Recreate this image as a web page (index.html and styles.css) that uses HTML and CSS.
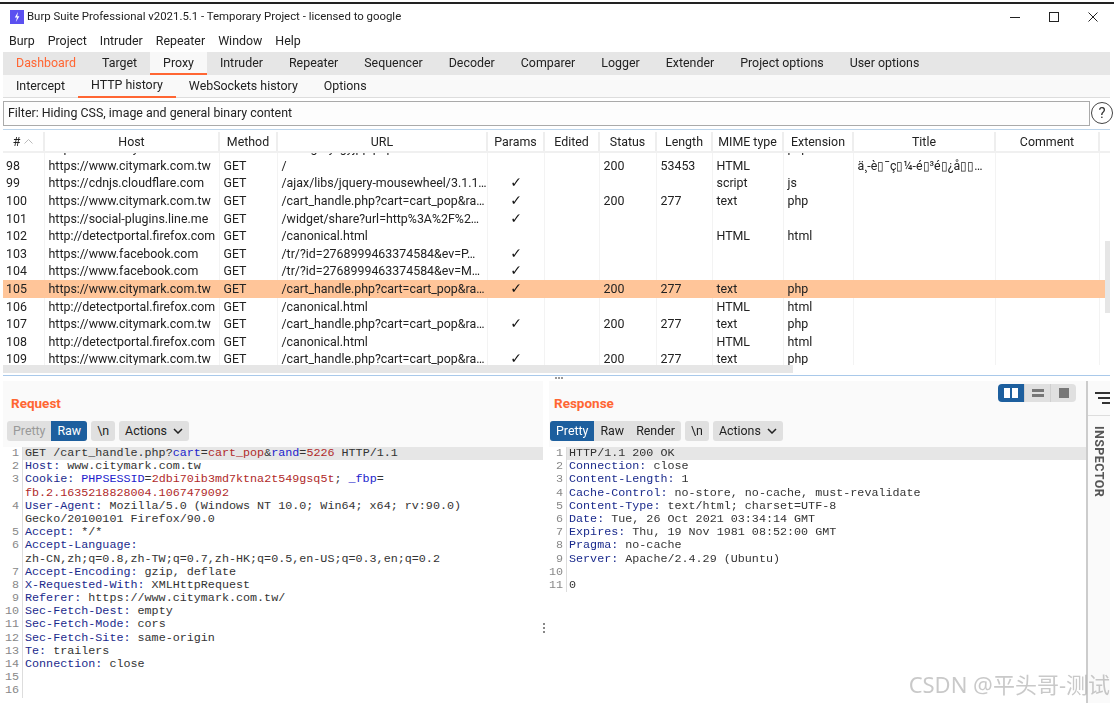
FILE: index.html
```html
<!DOCTYPE html>
<html lang="en">
<head>
<meta charset="utf-8">
<title>Burp Suite Professional</title>
<link rel="stylesheet" href="styles.css">
</head>
<body>
<div class="app">
  <header class="titlebar">
    <svg class="logo" width="14" height="14" viewBox="0 0 14 14"><rect width="14" height="14" fill="#5b50f0"/><path d="M8 2 4.8 7.6H7L5.8 12 9.4 6.2H7.2Z" fill="#fff"/></svg>
    <span class="title">Burp Suite Professional v2021.5.1 - Temporary Project - licensed to google</span>
    <div class="winctl">
      <svg width="12" height="12" viewBox="0 0 12 12"><path d="M1 6.5H11" stroke="#222" fill="none"/></svg>
      <svg width="12" height="12" viewBox="0 0 12 12"><rect x="1.5" y="1.5" width="9" height="9" stroke="#222" fill="none"/></svg>
      <svg width="12" height="12" viewBox="0 0 12 12"><path d="M1.5 1.5 10.5 10.5M10.5 1.5 1.5 10.5" stroke="#222" fill="none"/></svg>
    </div>
  </header>
  <nav class="menubar">
    <span>Burp</span><span>Project</span><span>Intruder</span><span>Repeater</span><span>Window</span><span>Help</span>
  </nav>
  <nav class="tabs">
    <span class="tab tab-alert">Dashboard</span><span class="tab">Target</span><span class="tab tab-on">Proxy</span><span class="tab">Intruder</span><span class="tab">Repeater</span><span class="tab">Sequencer</span><span class="tab">Decoder</span><span class="tab">Comparer</span><span class="tab">Logger</span><span class="tab">Extender</span><span class="tab">Project options</span><span class="tab">User options</span>
  </nav>
  <nav class="subtabs">
    <span class="subtab">Intercept</span><span class="subtab subtab-on">HTTP history</span><span class="subtab">WebSockets history</span><span class="subtab">Options</span>
  </nav>
  <div class="filterrow">
    <div class="filter">Filter: Hiding CSS, image and general binary content</div>
    <div class="help">?</div>
  </div>
  <section class="history">
    <div class="row head">
      <div class="num">#<svg class="sort" width="9" height="5" viewBox="0 0 9 5"><path d="M.5 4.5 4.5.5 8.5 4.5" stroke="#bbb" fill="none"/></svg></div><div>Host</div><div>Method</div><div>URL</div><div>Params</div><div>Edited</div><div>Status</div><div>Length</div><div>MIME type</div><div>Extension</div><div>Title</div><div>Comment</div><div></div>
    </div>
    <div class="rows">
      <div class="rows-inner">
        <div class="row"><div>97</div><div>https://www.citymark.com.tw</div><div>GET</div><div>/category/gyjpp.php</div><div class="ck">✓</div><div></div><div></div><div></div><div></div><div>php</div><div></div><div></div></div>
        <div class="row"><div>98</div><div>https://www.citymark.com.tw</div><div>GET</div><div>/</div><div class="ck"></div><div></div><div>200</div><div>53453</div><div>HTML</div><div></div><div>ä¸-è▯¯ç▯¼-é▯³é▯¿å▯▯…</div><div></div></div>
        <div class="row"><div>99</div><div>https://cdnjs.cloudflare.com</div><div>GET</div><div>/ajax/libs/jquery-mousewheel/3.1.1…</div><div class="ck">✓</div><div></div><div></div><div></div><div>script</div><div>js</div><div></div><div></div></div>
        <div class="row"><div>100</div><div>https://www.citymark.com.tw</div><div>GET</div><div>/cart_handle.php?cart=cart_pop&amp;ra…</div><div class="ck">✓</div><div></div><div>200</div><div>277</div><div>text</div><div>php</div><div></div><div></div></div>
        <div class="row"><div>101</div><div>https://social-plugins.line.me</div><div>GET</div><div>/widget/share?url=http%3A%2F%2…</div><div class="ck">✓</div><div></div><div></div><div></div><div></div><div></div><div></div><div></div></div>
        <div class="row"><div>102</div><div>http://detectportal.firefox.com</div><div>GET</div><div>/canonical.html</div><div class="ck"></div><div></div><div></div><div></div><div>HTML</div><div>html</div><div></div><div></div></div>
        <div class="row"><div>103</div><div>https://www.facebook.com</div><div>GET</div><div>/tr/?id=2768999463374584&amp;ev=P…</div><div class="ck">✓</div><div></div><div></div><div></div><div></div><div></div><div></div><div></div></div>
        <div class="row"><div>104</div><div>https://www.facebook.com</div><div>GET</div><div>/tr/?id=2768999463374584&amp;ev=M…</div><div class="ck">✓</div><div></div><div></div><div></div><div></div><div></div><div></div><div></div></div>
        <div class="row row-sel"><div>105</div><div>https://www.citymark.com.tw</div><div>GET</div><div>/cart_handle.php?cart=cart_pop&amp;ra…</div><div class="ck">✓</div><div></div><div>200</div><div>277</div><div>text</div><div>php</div><div></div><div></div></div>
        <div class="row"><div>106</div><div>http://detectportal.firefox.com</div><div>GET</div><div>/canonical.html</div><div class="ck"></div><div></div><div></div><div></div><div>HTML</div><div>html</div><div></div><div></div></div>
        <div class="row"><div>107</div><div>https://www.citymark.com.tw</div><div>GET</div><div>/cart_handle.php?cart=cart_pop&amp;ra…</div><div class="ck">✓</div><div></div><div>200</div><div>277</div><div>text</div><div>php</div><div></div><div></div></div>
        <div class="row"><div>108</div><div>http://detectportal.firefox.com</div><div>GET</div><div>/canonical.html</div><div class="ck"></div><div></div><div></div><div></div><div>HTML</div><div>html</div><div></div><div></div></div>
        <div class="row"><div>109</div><div>https://www.citymark.com.tw</div><div>GET</div><div>/cart_handle.php?cart=cart_pop&amp;ra…</div><div class="ck">✓</div><div></div><div>200</div><div>277</div><div>text</div><div>php</div><div></div><div></div></div>
      </div>
      <div class="vscroll"></div>
    </div>
    <div class="hscroll"><div class="hthumb"></div></div>
  </section>
  <div class="grip"><i></i><i></i><i></i></div>
  <main class="split">
    <section class="pane pane-req">
      <div class="panehead"><h2>Request</h2></div>
      <div class="toolbar">
        <div class="seg"><span class="dim">Pretty</span><span class="sel">Raw</span></div>
        <div class="seg"><span>\n</span></div>
        <div class="seg"><span>Actions<svg class="chev" width="10" height="6" viewBox="0 0 10 6"><path d="M1 1 5 5 9 1" stroke="#222" stroke-width="1.5" fill="none"/></svg></span></div>
      </div>
      <div class="editor">
        <div class="line cur"><b>1</b><code>GET /cart_handle.php?<em>cart</em>=<u>cart_pop</u>&amp;<em>rand</em>=<u>5226</u> HTTP/1.1</code></div>
        <div class="line"><b>2</b><code><i>Host:</i> www.citymark.com.tw</code></div>
        <div class="line"><b>3</b><code><i>Cookie:</i> <em>PHPSESSID</em>=<u>2dbi70ib3md7ktna2t549gsq5t</u>; <em>_fbp</em>=</code></div>
        <div class="line"><b></b><code><u>fb.2.1635218828004.1067479092</u></code></div>
        <div class="line"><b>4</b><code><i>User-Agent:</i> Mozilla/5.0 (Windows NT 10.0; Win64; x64; rv:90.0)</code></div>
        <div class="line"><b></b><code>Gecko/20100101 Firefox/90.0</code></div>
        <div class="line"><b>5</b><code><i>Accept:</i> */*</code></div>
        <div class="line"><b>6</b><code><i>Accept-Language:</i></code></div>
        <div class="line"><b></b><code>zh-CN,zh;q=0.8,zh-TW;q=0.7,zh-HK;q=0.5,en-US;q=0.3,en;q=0.2</code></div>
        <div class="line"><b>7</b><code><i>Accept-Encoding:</i> gzip, deflate</code></div>
        <div class="line"><b>8</b><code><i>X-Requested-With:</i> XMLHttpRequest</code></div>
        <div class="line"><b>9</b><code><i>Referer:</i> https://www.citymark.com.tw/</code></div>
        <div class="line"><b>10</b><code><i>Sec-Fetch-Dest:</i> empty</code></div>
        <div class="line"><b>11</b><code><i>Sec-Fetch-Mode:</i> cors</code></div>
        <div class="line"><b>12</b><code><i>Sec-Fetch-Site:</i> same-origin</code></div>
        <div class="line"><b>13</b><code><i>Te:</i> trailers</code></div>
        <div class="line"><b>14</b><code><i>Connection:</i> close</code></div>
        <div class="line"><b>15</b><code></code></div>
        <div class="line"><b>16</b><code></code></div>
      </div>
      <div class="dots"><i></i><i></i><i></i></div>
    </section>
    <section class="pane pane-res">
      <div class="panehead">
        <h2>Response</h2>
        <div class="views">
          <span class="view view-on"><svg width="14" height="10" viewBox="0 0 14 10"><path d="M0 0H6V10H0ZM8 0H14V10H8Z" fill="#fff"/></svg></span>
          <span class="view"><svg width="14" height="10" viewBox="0 0 14 10"><path d="M1 1H13V4H1ZM1 6H13V9H1Z" fill="#777"/></svg></span>
          <span class="view"><svg width="14" height="10" viewBox="0 0 14 10"><path d="M2 0H12V10H2Z" fill="#777"/></svg></span>
        </div>
      </div>
      <div class="toolbar">
        <div class="seg"><span class="sel">Pretty</span><span>Raw</span><span>Render</span></div>
        <div class="seg"><span>\n</span></div>
        <div class="seg"><span>Actions<svg class="chev" width="10" height="6" viewBox="0 0 10 6"><path d="M1 1 5 5 9 1" stroke="#222" stroke-width="1.5" fill="none"/></svg></span></div>
      </div>
      <div class="editor">
        <div class="line cur"><b>1</b><code>HTTP/1.1 200 OK</code></div>
        <div class="line"><b>2</b><code><i>Connection:</i> close</code></div>
        <div class="line"><b>3</b><code><i>Content-Length:</i> 1</code></div>
        <div class="line"><b>4</b><code><i>Cache-Control:</i> no-store, no-cache, must-revalidate</code></div>
        <div class="line"><b>5</b><code><i>Content-Type:</i> text/html; charset=UTF-8</code></div>
        <div class="line"><b>6</b><code><i>Date:</i> Tue, 26 Oct 2021 03:34:14 GMT</code></div>
        <div class="line"><b>7</b><code><i>Expires:</i> Thu, 19 Nov 1981 08:52:00 GMT</code></div>
        <div class="line"><b>8</b><code><i>Pragma:</i> no-cache</code></div>
        <div class="line"><b>9</b><code><i>Server:</i> Apache/2.4.29 (Ubuntu)</code></div>
        <div class="line"><b>10</b><code></code></div>
        <div class="line"><b>11</b><code>0</code></div>
      </div>
    </section>
    <aside class="inspector">
      <div class="insp-icon"><svg width="15" height="12" viewBox="0 0 15 12"><path d="M0 1H15M3 6H15M7 11H15" stroke="#333" stroke-width="2" fill="none"/></svg></div>
      <div class="insp-label">INSPECTOR</div>
    </aside>
  </main>
</div>
<div class="watermark">CSDN @平头哥-测试</div>
</body>
</html>
```
FILE: styles.css
```css
* { box-sizing: border-box; }
html, body { margin: 0; height: 100%; background: #fff; overflow: hidden; }
body {
  --cols: 42px 175px 58px 210px 57px 55px 57px 56px 71px 70px 142px 104px 1fr;
  font: 12.4px/1 Roboto, "Noto Sans", sans-serif;
  color: #222;
  position: relative;
}
.app {
  width: 1110px;
  height: 703px;
  padding: 2px 0 0 3px;
  display: flex;
  flex-direction: column;
  filter: blur(.35px);
}
.titlebar {
  flex: 0 0 28px;
  border-top: 2px solid #222;
  display: flex;
  align-items: center;
  margin-left: -3px;
  padding-left: 10px;
  gap: 3px;
  width: 1114px;
}
.title { font-size: 11.4px; }
.winctl { margin-left: auto; display: flex; gap: 27px; padding-right: 15px; }
.menubar {
  flex: 0 0 22px;
  display: flex;
  align-items: center;
  gap: 13px;
  padding-left: 6px;
}
.tabs {
  flex: 0 0 23px;
  display: flex;
  background: #e6e6e6;
  align-items: stretch;
}
.tab { padding: 0 13px; display: flex; align-items: center; }
.tab-alert { color: #ff6633; }
.tab-on { background: #f8f8f8; border-bottom: 2px solid #ff6633; padding-top: 2px; }
.subtabs {
  flex: 0 0 23px;
  display: flex;
  background: #f9f9f9;
  border-bottom: 1px solid #ddd;
}
.subtab { padding: 0 13px; display: flex; align-items: center; }
.subtab-on { border-bottom: 2px solid #ff6633; margin-bottom: -1px; }
.filterrow {
  flex: 0 0 32px;
  display: flex;
  align-items: flex-start;
  padding-top: 3px;
  border-bottom: 1px solid #bcd4ea;
}
.filter {
  flex: 0 0 1087px;
  height: 25px;
  border: 1px solid #aaa;
  background: #fdfdfd;
  display: flex;
  align-items: center;
  padding-left: 4px;
}
.help {
  flex: 0 0 22px;
  height: 22px;
  margin: 1px 0 0 1px;
  border: 1.5px solid #444;
  border-radius: 50%;
  font-size: 15px;
  display: flex;
  align-items: center;
  justify-content: center;
  color: #333;
}
.history { flex: 0 0 245px; padding-top: 2px; display: flex; flex-direction: column; }
.row {
  display: grid;
  grid-template-columns: var(--cols);
  height: 17.6px;
  line-height: 17.6px;
  white-space: nowrap;
}
.row > div { padding-left: 3.5px; overflow: hidden; border-right: 1px solid #f3f3f3; }
.row > div:first-child { padding-left: 3px; }
.row > div:nth-child(13) { border-right: 0; }
.head { height: 21px; line-height: 19px; border-bottom: 2px solid #f0f0f0; flex: 0 0 21px; }
.head > div { text-align: center; padding-left: 0; border-right: 2px solid #eee; }
.row.head > div:first-child { padding-left: 0; }
.sort { margin-left: 4px; vertical-align: 2px; }
.rows { flex: 0 0 212px; overflow: hidden; position: relative; }
.rows-inner { margin-top: -13.8px; }
.row-sel { background: #ffc599; }
.row-sel > div { border-right-color: transparent; }
.row > .ck { text-align: center; padding-left: 0; font: 14px/17.6px "DejaVu Sans", sans-serif; color: #111; }
.vscroll { position: absolute; right: 0; top: 88px; width: 5px; height: 72px; background: #e6e6e6; }
.hscroll { flex: 0 0 8px; background: #fff; }
.hthumb { width: 790px; height: 8px; background: #e6e6e6; }
.grip {
  flex: 0 0 6px;
  border-top: 1px solid #a9c9ea;
  display: flex;
  justify-content: center;
  gap: 1px;
  padding: 1px 0 0 4px;
}
.grip i { width: 2px; height: 2px; background: #999; }
.split { flex: 1; display: flex; min-height: 0; }
.pane { display: flex; flex-direction: column; position: relative; }
.pane-req { flex: 0 0 540px; }
.pane-res { flex: 0 0 537px; margin-left: 6px; }
.panehead {
  flex: 0 0 40px;
  background: #fafafa;
  display: flex;
  align-items: flex-start;
  justify-content: space-between;
  padding: 3px 10px 0 8px;
}
.pane-res .panehead { padding-left: 5px; }
h2 { margin: 10px 0 0; font-size: 13.5px; line-height: 18px; font-weight: 700; color: #ff6633; }
.views { display: flex; border-radius: 4px; overflow: hidden; }
.view { width: 26px; height: 18px; display: flex; align-items: center; justify-content: center; background: #e0e0e0; border-left: 1px solid #d0d0d0; }
.view-on { background: #1d5f9e; border-left: 0; }
.toolbar {
  flex: 0 0 26px;
  display: flex;
  gap: 4px;
  background: #fafafa;
  padding: 0 0 6px 4px;
}
.pane-res .toolbar { padding-left: 1px; }
.seg { display: flex; background: #e0e0e0; border-radius: 3px; overflow: hidden; }
.seg span { display: flex; align-items: center; padding: 0 6px; }
.seg .dim { color: #999; }
.seg .sel { background: #1d5f9e; color: #fff; }
.chev { margin-left: 6px; }
.editor { flex: 1; background: #fff; font: 11.73px/13.2px "Liberation Mono", monospace; color: #333; padding-bottom: 6px; }
.line { display: flex; height: 13.2px; white-space: pre; }
.line b { flex: 0 0 20px; height: 100%; text-align: right; padding-right: 3px; font-weight: 400; color: #888; border-right: 1px solid #ddd; }
.line code { font: inherit; padding-left: 2px; flex: 1; }
.pane-res .line b { flex-basis: 18px; }
.cur code { background: #e6e6e6; }
.line i { font-style: normal; color: #1a2a8c; }
.line em { font-style: normal; color: #2222cc; }
.line u { text-decoration: none; color: #b02a2a; }
.dots { position: absolute; right: -2px; top: 242px; display: flex; flex-direction: column; gap: 2px; }
.dots i { width: 2px; height: 2px; background: #888; }
.inspector { flex: 0 0 24px; border-left: 2px solid #ccc; background: #fafafa; }
.insp-icon { height: 35px; border-bottom: 1px solid #ddd; display: flex; align-items: center; justify-content: flex-end; }
.insp-label { writing-mode: vertical-rl; font-weight: 700; font-size: 12.5px; color: #555; margin: 10px 0 0 4px; letter-spacing: .4px; }
.watermark {
  position: absolute;
  right: 4px;
  top: 672px;
  font: 22px/1.1 "Noto Sans", "Noto Sans CJK SC", sans-serif;
  color: rgba(120, 120, 120, .4);
  white-space: nowrap;
}
```
